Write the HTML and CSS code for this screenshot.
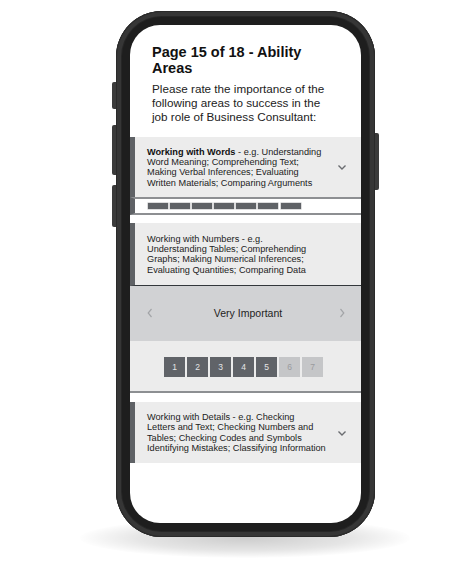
FILE: index.html
```html
<!DOCTYPE html>
<html lang="en">
<head>
<meta charset="utf-8">
<title>Page 15 of 18 - Ability Areas</title>
<link rel="stylesheet" href="styles.css">
</head>
<body>
<div class="stage">
  <div class="phone">
    <span class="btn btn-l1"></span>
    <span class="btn btn-l2"></span>
    <span class="btn btn-l3"></span>
    <span class="btn btn-r1"></span>
    <div class="screen">
      <div class="header">
        <h1 class="title">Page 15 of 18 - Ability Areas</h1>
        <p class="intro">Please rate the importance of the following areas to success in the job role of Business Consultant:</p>
      </div>

      <div class="card card-first">
        <div class="card-text"><b>Working with Words</b> - e.g. Understanding<br>Word Meaning; Comprehending Text;<br>Making Verbal Inferences; Evaluating<br>Written Materials; Comparing Arguments</div>
        <svg class="chev" width="10" height="7" viewBox="0 0 10 7"><path d="M1.5 1.5 L5 5 L8.5 1.5" fill="none" stroke="#6a6c70" stroke-width="1.4"/></svg>
      </div>
      <div class="strip">
        <span class="mini"></span><span class="mini"></span><span class="mini"></span><span class="mini"></span><span class="mini"></span><span class="mini"></span><span class="mini"></span>
      </div>

      <div class="card card-open">
        <div class="card-text">Working with Numbers - e.g.<br>Understanding Tables; Comprehending<br>Graphs; Making Numerical Inferences;<br>Evaluating Quantities; Comparing Data</div>
      </div>
      <div class="rating">
        <svg class="arrow" width="6" height="10" viewBox="0 0 6 10"><path d="M4.5 1 L1.2 5 L4.5 9" fill="none" stroke="#a3a5a8" stroke-width="1.2"/></svg>
        <span class="rating-label">Very Important</span>
        <svg class="arrow" width="6" height="10" viewBox="0 0 6 10"><path d="M1.5 1 L4.8 5 L1.5 9" fill="none" stroke="#a3a5a8" stroke-width="1.2"/></svg>
      </div>
      <div class="scale">
        <span class="step on">1</span><span class="step on">2</span><span class="step on">3</span><span class="step on">4</span><span class="step on">5</span><span class="step">6</span><span class="step">7</span>
      </div>

      <div class="card card-last">
        <div class="card-text">Working with Details - e.g. Checking<br>Letters and Text; Checking Numbers and<br>Tables; Checking Codes and Symbols<br>Identifying Mistakes; Classifying Information</div>
        <svg class="chev" width="10" height="7" viewBox="0 0 10 7"><path d="M1.5 1.5 L5 5 L8.5 1.5" fill="none" stroke="#6a6c70" stroke-width="1.4"/></svg>
      </div>
    </div>
  </div>
  <div class="floor"></div>
</div>
</body>
</html>
```

FILE: styles.css
```css
html, body {
  margin: 0;
  padding: 0;
  background: #ffffff;
}

body {
  font-family: "Liberation Sans", Arial, sans-serif;
  color: #222;
}

.stage {
  position: relative;
  width: 474px;
  height: 568px;
  padding: 11px 0 0 116px;
  box-sizing: border-box;
}

.floor {
  position: absolute;
  left: 80px;
  top: 518px;
  width: 330px;
  height: 40px;
  border-radius: 50%;
  background: radial-gradient(ellipse at center, rgba(0,0,0,0.20) 0%, rgba(0,0,0,0.10) 45%, rgba(0,0,0,0) 72%);
  z-index: 0;
}

.phone {
  position: relative;
  z-index: 1;
  width: 259px;
  height: 526px;
  box-sizing: border-box;
  padding: 14px;
  border-radius: 46px;
  background: #1e1e1e;
  box-shadow: inset 0 0 0 1px #2a2a2a, inset 0 0 0 5px #363636, inset 0 0 0 6px #262626;
}

.btn {
  position: absolute;
  width: 4px;
  background: #3b3b3b;
  border-radius: 2px 0 0 2px;
}
.btn-l1 { left: -4px; top: 71px; height: 27px; }
.btn-l2 { left: -4px; top: 114px; height: 50px; }
.btn-l3 { left: -4px; top: 174px; height: 42px; }
.btn-r1 { right: -4px; top: 122px; height: 57px; border-radius: 0 2px 2px 0; }

.screen {
  width: 231px;
  height: 498px;
  background: #ffffff;
  border-radius: 30px;
  overflow: hidden;
  display: flex;
  flex-direction: column;
}

.header {
  padding: 19px 33px 0 22px;
}

.title {
  margin: 0;
  font-size: 14.5px;
  line-height: 16px;
  font-weight: bold;
  color: #111;
}

.intro {
  margin: 6px 0 0;
  font-size: 11.7px;
  line-height: 14px;
  color: #222;
}

.card {
  display: flex;
  align-items: center;
  background: #ececec;
  border-left: 5px solid #5f6266;
  padding: 9.5px 14px 9px 12px;
}

.card-text {
  font-size: 9.2px;
  line-height: 10.4px;
  color: #222;
  white-space: nowrap;
}
.card-text b {
  color: #111;
}

.chev {
  margin-left: auto;
  margin-top: 1px;
}

.card-first {
  margin-top: 13px;
}

.strip {
  display: flex;
  gap: 2.2px;
  padding: 4px 0 4px 12.5px;
  background: #ffffff;
  border-top: 2px solid #8d8f92;
  border-bottom: 2px solid #8d8f92;
  border-left: 5px solid #5f6266;
}

.mini {
  width: 20px;
  height: 6px;
  background: #5f6266;
  box-shadow: 0 0 0 0.5px #b9babc;
}

.card-open {
  margin-top: 8px;
  padding-top: 10.5px;
  padding-bottom: 9.5px;
  border-bottom: 1px solid #33373b;
}

.rating {
  display: flex;
  align-items: center;
  justify-content: space-between;
  height: 55px;
  padding: 0 16px 0 17px;
  background: #d1d2d4;
}

.rating-label {
  font-size: 10.5px;
  color: #1e1e1e;
  margin-left: 4px;
}

.arrow {
  display: block;
}

.scale {
  display: flex;
  justify-content: center;
  gap: 2px;
  padding: 16px 4px 14px 0;
  background: #ececec;
  border-bottom: 2px solid #8d8f92;
}

.step {
  width: 21px;
  height: 20px;
  display: flex;
  align-items: center;
  justify-content: center;
  font-size: 8.5px;
  color: #9a9b9e;
  background: #c5c6c8;
}
.step.on {
  background: #606368;
  color: #e4e5e6;
}

.card-last {
  margin-top: 9px;
  padding-top: 10px;
  padding-bottom: 9.5px;
}
```
